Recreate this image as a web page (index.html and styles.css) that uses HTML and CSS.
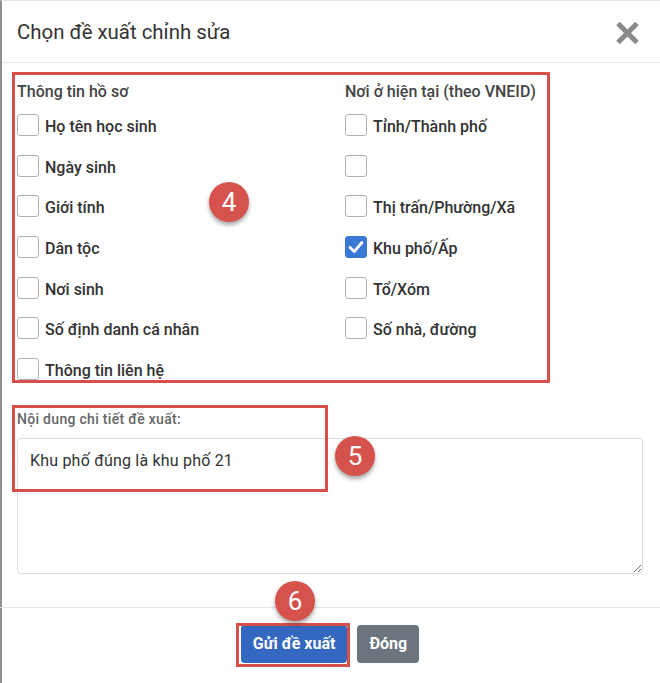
FILE: index.html
```html
<!DOCTYPE html>
<html lang="vi">
<head>
<meta charset="utf-8">
<title>Chọn đề xuất chỉnh sửa</title>
<link rel="stylesheet" href="styles.css">
</head>
<body>
<div class="page">
  <div class="modal">
    <div class="modal-header">
      <h4 class="modal-title">Chọn đề xuất chỉnh sửa</h4>
      <span class="close" aria-label="Đóng">
        <svg width="25" height="22" viewBox="0 0 25 22"><path d="M3 1.5 L22 20.5 M22 1.5 L3 20.5" stroke="#8a8a8a" stroke-width="5" fill="none"/></svg>
      </span>
    </div>
    <div class="modal-body">
      <div class="fields">
        <div class="col">
          <div class="col-title">Thông tin hồ sơ</div>
          <div class="check"><span class="box"></span>Họ tên học sinh</div>
          <div class="check"><span class="box"></span>Ngày sinh</div>
          <div class="check"><span class="box"></span>Giới tính</div>
          <div class="check"><span class="box"></span>Dân tộc</div>
          <div class="check"><span class="box"></span>Nơi sinh</div>
          <div class="check"><span class="box"></span>Số định danh cá nhân</div>
          <div class="check"><span class="box"></span>Thông tin liên hệ</div>
        </div>
        <div class="col">
          <div class="col-title">Nơi ở hiện tại (theo VNEID)</div>
          <div class="check"><span class="box"></span>Tỉnh/Thành phố</div>
          <div class="check"><span class="box"></span></div>
          <div class="check"><span class="box"></span>Thị trấn/Phường/Xã</div>
          <div class="check"><span class="box checked"><svg width="22" height="22" viewBox="0 0 22 22"><path d="M5 11.5 L9.2 15.5 L17 6.5" stroke="#fff" stroke-width="2.8" fill="none" stroke-linecap="round" stroke-linejoin="round"/></svg></span>Khu phố/Ấp</div>
          <div class="check"><span class="box"></span>Tổ/Xóm</div>
          <div class="check"><span class="box"></span>Số nhà, đường</div>
        </div>
      </div>
      <div class="detail">
        <div class="detail-label">Nội dung chi tiết đề xuất:</div>
        <textarea class="detail-input">Khu phố đúng là khu phố 21</textarea>
      </div>
    </div>
    <div class="modal-footer">
      <span class="btn btn-primary">Gửi đề xuất</span>
      <span class="btn btn-secondary">Đóng</span>
    </div>
  </div>

  <div class="anno-box anno-fields"></div>
  <div class="anno-box anno-detail"></div>
  <div class="anno-box anno-submit"></div>
  <div class="badge badge-4">4</div>
  <div class="badge badge-5">5</div>
  <div class="badge badge-6">6</div>
</div>
</body>
</html>
```

FILE: styles.css
```css
body {
  margin: 0;
  background: #fff;
  font-family: Roboto, "Noto Sans", Arial, sans-serif;
  color: #333;
}

.page {
  position: relative;
  width: 660px;
  height: 683px;
  overflow: hidden;
}

.modal {
  height: 683px;
  box-sizing: border-box;
  border-left: 2px solid #8f8f8f;
  border-top: 1px solid #e3e3e3;
}

.modal-header {
  height: 62px;
  box-sizing: border-box;
  border-bottom: 1px solid #e4e6ea;
  display: flex;
  align-items: center;
  justify-content: space-between;
  padding: 0 20px 0 15px;
}

.modal-title {
  margin: 0;
  font-size: 20.4px;
  font-weight: 400;
  color: #333;
}

.close {
  display: flex;
  margin-top: 2px;
}

.modal-body {
  padding: 18px 15px 0 15px;
}

.fields {
  display: grid;
  grid-template-columns: 328px 1fr;
}

.col-title {
  font-size: 16px;
  font-weight: 500;
  line-height: 22px;
  height: 25px;
  color: #444;
}

.check {
  display: flex;
  align-items: center;
  height: 40.7px;
  font-size: 16px;
  font-weight: 500;
  color: #333;
}

.box {
  width: 22px;
  height: 22px;
  box-sizing: border-box;
  border: 1px solid #b3b3b3;
  border-radius: 3px;
  margin-right: 6px;
  margin-bottom: 3px;
  flex: none;
  background: #fff;
}

.box.checked {
  background: #3a78d6;
  border-color: #3a78d6;
  display: flex;
  align-items: center;
  justify-content: center;
}

.box.checked svg {
  flex: none;
}

.detail-label {
  margin-top: 20px;
  font-size: 14px;
  font-weight: 500;
  letter-spacing: 0.3px;
  line-height: 16px;
  color: #666;
}

.detail-input {
  display: block;
  margin-top: 11px;
  width: 626px;
  height: 136px;
  box-sizing: border-box;
  border: 1px solid #d8dbe0;
  border-radius: 4px;
  padding: 11px 12px;
  font-family: Roboto, "Noto Sans", Arial, sans-serif;
  font-size: 16px;
  font-weight: 400;
  letter-spacing: 0.2px;
  line-height: 22px;
  color: #333;
  background: #fff;
}

.modal-footer {
  margin-top: 33px;
  border-top: 1px solid #e4e6ea;
  padding-top: 17px;
  display: flex;
  justify-content: center;
  gap: 10px;
  margin-left: -2px;
}

.btn {
  display: inline-flex;
  align-items: center;
  justify-content: center;
  height: 38px;
  border-radius: 4px;
  font-size: 16px;
  font-weight: 700;
  color: #fff;
  padding: 0 11px;
}

.btn-primary {
  background: #3468c0;
  padding: 0 12px;
}

.btn-secondary {
  background: #6c757d;
  padding: 0 12px;
}

/* annotation overlays */
.anno-box {
  position: absolute;
  box-sizing: border-box;
  border: 3px solid #d6504a;
}

.anno-fields {
  left: 12px;
  top: 72px;
  width: 538px;
  height: 311px;
}

.anno-detail {
  left: 12px;
  top: 405px;
  width: 316px;
  height: 87px;
}

.anno-submit {
  left: 236px;
  top: 623px;
  width: 114px;
  height: 44px;
}

.badge {
  position: absolute;
  width: 40px;
  height: 40px;
  margin: -20px 0 0 -20px;
  border-radius: 50%;
  background: #d6524c;
  color: #fff;
  font-size: 26px;
  line-height: 40px;
  text-align: center;
  box-shadow: 0 3px 4px rgba(0, 0, 0, 0.35);
}

.badge-4 { left: 229px; top: 202px; }
.badge-5 { left: 355px; top: 456px; }
.badge-6 { left: 295px; top: 601px; }
```
